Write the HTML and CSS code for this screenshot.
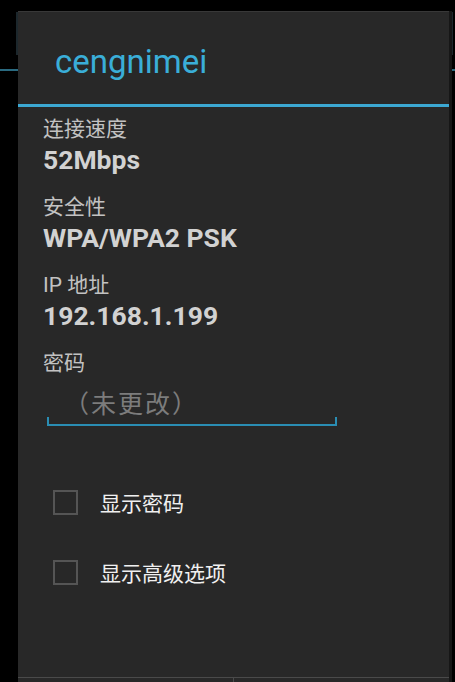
FILE: index.html
```html
<!doctype html>
<html>
<head>
<meta charset="utf-8" />
<meta name="viewport" content="width=device-width" />

<title>cengnimei</title>

<link rel="stylesheet" href="styles.css">

</head>
<body>

<div class="screen">
  <div class="screen-bar">
    <div class="screen-tab"></div>
  </div>
</div>

<div class="dialog">
  <h1 class="dialog-title">cengnimei</h1>

  <div class="dialog-body">
    <div class="field">
      <div class="field-label">连接速度</div>
      <div class="field-value">52Mbps</div>
    </div>
    <div class="field">
      <div class="field-label">安全性</div>
      <div class="field-value">WPA/WPA2 PSK</div>
    </div>
    <div class="field">
      <div class="field-label">IP 地址</div>
      <div class="field-value">192.168.1.199</div>
    </div>
    <div class="field field--password">
      <div class="field-label">密码</div>
      <div class="edit"><span class="edit-hint">（未更改）</span></div>
    </div>

    <div class="checks">
      <div class="check"><span class="check-box"></span><span class="check-text">显示密码</span></div>
      <div class="check"><span class="check-box"></span><span class="check-text">显示高级选项</span></div>
    </div>
  </div>

  <div class="dialog-buttons">
    <div class="dialog-button"></div>
    <div class="dialog-button"></div>
  </div>
</div>

</body>
</html>
```

FILE: styles.css
```css
* { box-sizing: border-box; }

html, body {
  margin: 0;
  height: 682px;
  overflow: hidden;
  background: #000;
}

body {
  position: relative;
  font-family: Roboto, "Noto Sans CJK SC", sans-serif;
}

/* the app screen behind the dialog */
.screen-bar {
  height: 71px;
  padding-top: 12px;
  border-bottom: 2px solid #2a6a80;
}

.screen-tab {
  margin-left: 16px;
  width: 437px;
  height: 43px;
  background: #1c272c;
}

/* dialog sits over the screen, cut by the bottom of the window */
.dialog {
  position: absolute;
  left: 18px;
  top: 11px;
  width: 431px;
  height: 671px;
  display: flex;
  flex-direction: column;
  background: #282828;
  border-top: 1px solid #383838;
  box-shadow: 3px 0 0 #161616;
}

.dialog-title {
  margin: 0;
  height: 95px;
  padding: 5px 0 0 37px;
  line-height: 90px;
  font-size: 33px;
  font-weight: normal;
  color: #3aaed8;
  border-bottom: 3px solid #3ca8d2;
  flex: none;
}

.dialog-body {
  flex: 1;
  padding: 7px 0 0 25px;
}

.field { margin-bottom: 16px; }

.field-label {
  line-height: 30px;
  font-size: 21px;
  color: #c2c2c2;
}

.field-value {
  line-height: 32px;
  font-size: 26.5px;
  font-weight: bold;
  color: #d2d2d2;
}

.field--password { margin-bottom: 0; }

.edit {
  position: relative;
  width: 290px;
  margin-left: 4px;
  padding: 7px 0 0 17px;
  line-height: 39px;
  height: 48px;
  border-bottom: 2px solid #2a8db3;
}

.edit:after {
  content: '';
  position: absolute;
  left: 0;
  right: 0;
  bottom: -2px;
  height: 7px;
  border: 2px solid #2a8db3;
  border-top: none;
}

.edit-hint {
  font-size: 25px;
  letter-spacing: 2px;
  color: #7c7c7c;
}

.checks { margin-top: 41px; }

.check {
  display: flex;
  align-items: center;
  height: 70px;
  padding-left: 10px;
}

.check-box {
  width: 25px;
  height: 25px;
  border: 2px solid #555;
  margin-right: 22px;
}

.check-text {
  font-size: 21px;
  color: #f0f0f0;
}

.dialog-buttons {
  display: flex;
  height: 5px;
  border-top: 1px solid #4a4a4a;
  flex: none;
}

.dialog-button { flex: 1; }

.dialog-button + .dialog-button { border-left: 1px solid #4a4a4a; }
```
